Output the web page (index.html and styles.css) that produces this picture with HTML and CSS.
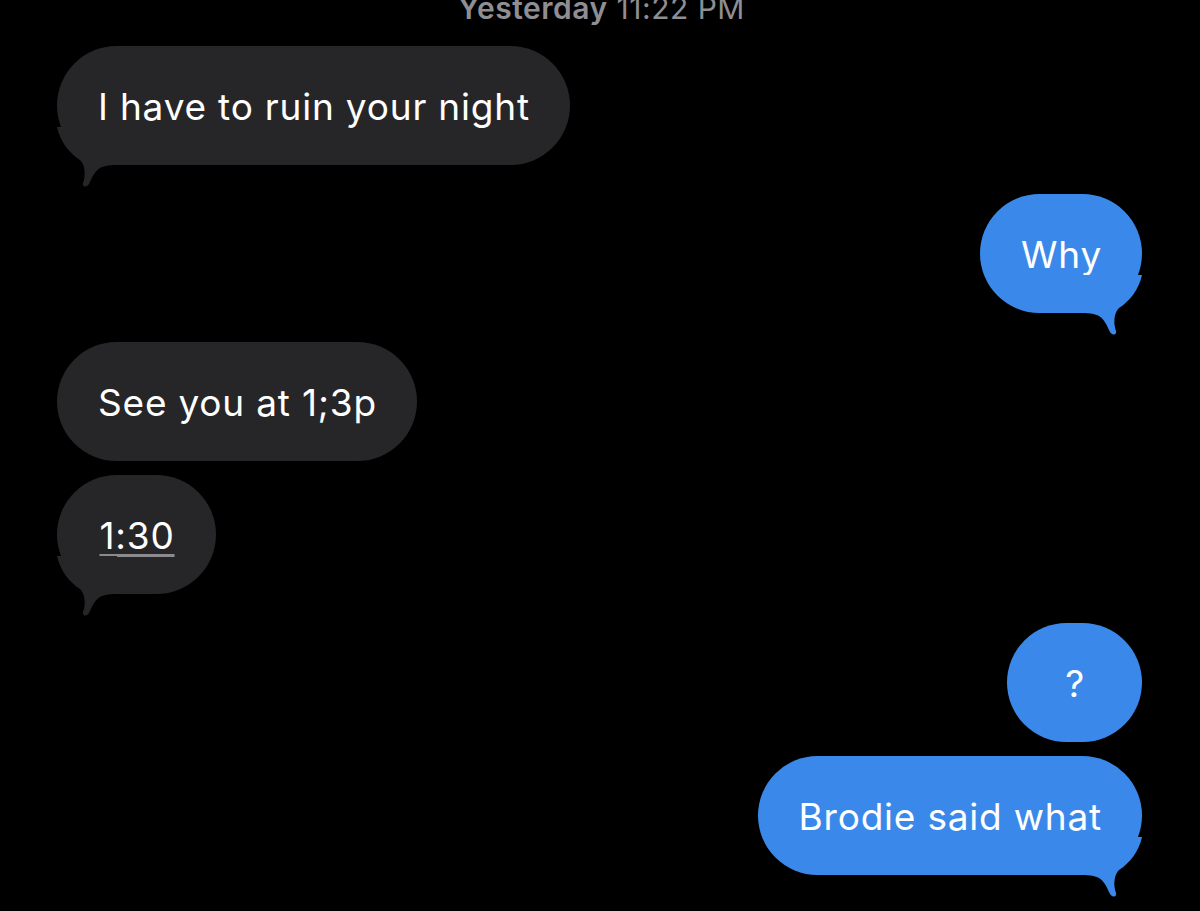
FILE: index.html
```html
<!DOCTYPE html>
<html>
<head>
<meta charset="utf-8">
<link rel="stylesheet" href="styles.css">
</head>
<body>
<div class="thread">
  <div class="stamp"><span class="day">Yesterday</span> 11:22 PM</div>

  <div class="group in">
    <div class="msg">I have to ruin your night<svg class="tail" viewBox="0 0 62 62" width="62" height="62"><path d="M0 0 C3 14 12 26 23 33 C28 38 29 48 26 56 C25 60 29 61 32 57 C35 51 37 45 43 41 C47 39 51 38 60 38 L60 0 Z"/></svg></div>
  </div>

  <div class="group out">
    <div class="msg">Why<svg class="tail" viewBox="0 0 62 62" width="62" height="62"><path d="M0 0 C3 14 12 26 23 33 C28 38 29 48 26 56 C25 60 29 61 32 57 C35 51 37 45 43 41 C47 39 51 38 60 38 L60 0 Z"/></svg></div>
  </div>

  <div class="group in">
    <div class="msg">See you at 1;3p</div>
    <div class="msg"><span class="link">1:30</span><svg class="tail" viewBox="0 0 62 62" width="62" height="62"><path d="M0 0 C3 14 12 26 23 33 C28 38 29 48 26 56 C25 60 29 61 32 57 C35 51 37 45 43 41 C47 39 51 38 60 38 L60 0 Z"/></svg></div>
  </div>

  <div class="group out">
    <div class="msg short">?</div>
    <div class="msg">Brodie said what<svg class="tail" viewBox="0 0 62 62" width="62" height="62"><path d="M0 0 C3 14 12 26 23 33 C28 38 29 48 26 56 C25 60 29 61 32 57 C35 51 37 45 43 41 C47 39 51 38 60 38 L60 0 Z"/></svg></div>
  </div>
</div>
</body>
</html>
```

FILE: styles.css
```css
html, body {
  margin: 0;
  padding: 0;
  background: #000;
}

body {
  font-family: Inter, "Liberation Sans", sans-serif;
  color: #fff;
  overflow: hidden;
  height: 911px;
}

.thread {
  display: flex;
  flex-direction: column;
  padding: 0 58px 0 57px;
}

.stamp {
  text-align: center;
  color: #8e8e93;
  font-size: 30px;
  letter-spacing: 0.5px;
  line-height: 30px;
  height: 30px;
  margin-top: -7px;
  margin-bottom: 23px;
  padding-left: 4px;
}

.stamp .day {
  font-weight: 600;
}

.group {
  display: flex;
  flex-direction: column;
  gap: 14px;
  margin-bottom: 29px;
}

.group.in {
  align-items: flex-start;
}

.group.out {
  align-items: flex-end;
}

.msg {
  position: relative;
  font-size: 37px;
  letter-spacing: 0.8px;
  line-height: 43px;
  padding: 39px 40px 37px 41px;
  border-radius: 60px;
  min-width: 78px;
  text-align: center;
  white-space: nowrap;
}

.in .msg {
  background: #262628;
}

.out .msg {
  background: #3a89ea;
}

.msg.short {
  min-width: 54px;
}

.link {
  text-decoration: underline;
  text-decoration-color: #8a8a8f;
  text-decoration-thickness: 3px;
  text-underline-offset: 5px;
  text-decoration-skip-ink: none;
}

.tail {
  position: absolute;
  bottom: -24px;
  display: block;
}

.in .tail {
  left: 0;
}

.in .tail path {
  fill: #262628;
}

.out .tail {
  right: 0;
  transform: scaleX(-1);
}

.out .tail path {
  fill: #3a89ea;
}
```
